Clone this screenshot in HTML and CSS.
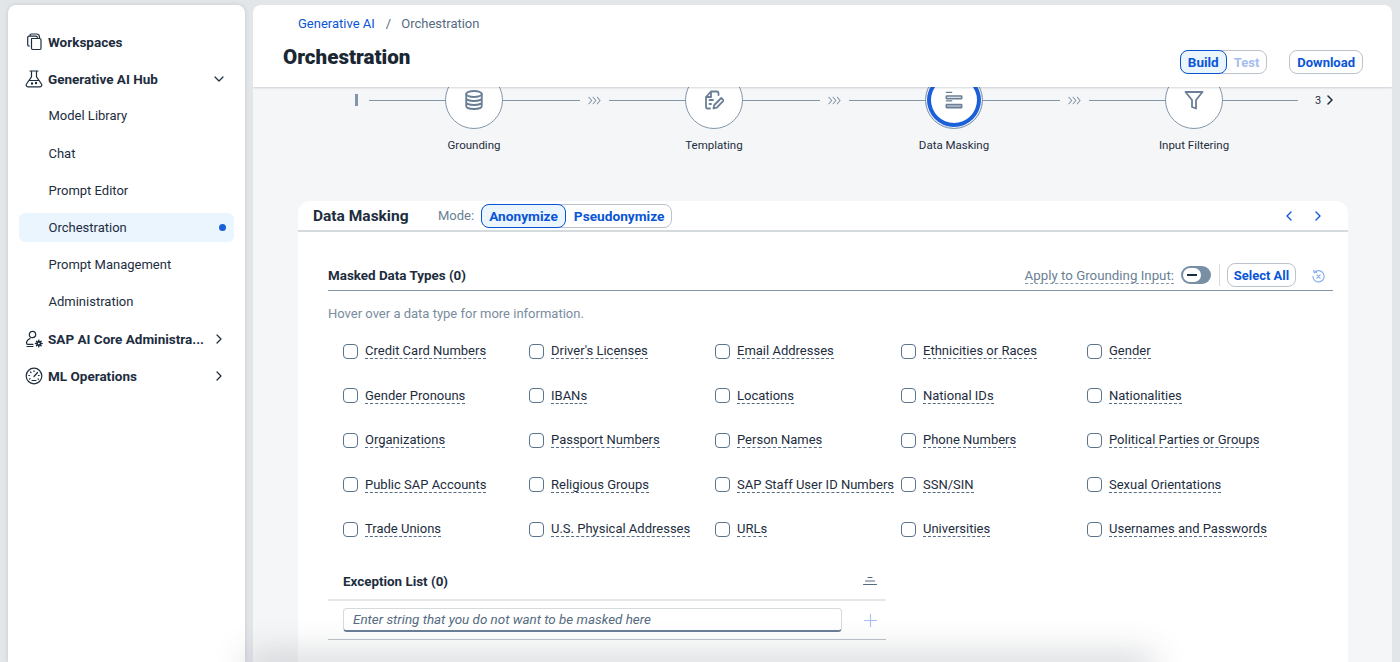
FILE: index.html
```html
<!DOCTYPE html>
<html>
<head>
<meta charset="UTF-8">
<title>Orchestration</title>
<link rel="stylesheet" href="styles.css">
</head>
<body>
<div class="page">
  <nav class="sidebar">
    <a class="nav-item nav-top">
      <svg class="nav-icon" viewBox="0 0 18 18"><path d="M5 3.500V2.800C5 2 5.500 1.500 6.300 1.500h5.200c2 0 3 1 3 3v1M4.500 13.500H4c-.8 0-1.300-.5-1.300-1.300V5c0-.8.500-1.300 1.300-1.300h7c.8 0 1.300.5 1.300 1.300M6.800 6h8c.7 0 1.200.5 1.200 1.200v8.600c0 .7-.5 1.200-1.200 1.200h-7c-.7 0-1.300-.5-1.300-1.200V6.300z" transform="translate(0 -.5)"/></svg>
      <span class="nav-text">Workspaces</span>
    </a>
    <a class="nav-item nav-top">
      <svg class="nav-icon" viewBox="0 0 18 18"><path d="M5 1h8M6.500 1v5.800L1.500 14c-.7 1.200-.2 2.800 1.400 2.800h12.200c1.600 0 2.100-1.600 1.400-2.800l-5-7.200V1M4.500 10.500h9"/><circle cx="7" cy="13.500" r=".6"/><circle cx="11" cy="13" r=".6"/></svg>
      <span class="nav-text">Generative AI Hub</span>
      <svg class="nav-caret" viewBox="0 0 10 10"><path d="M1 3l4 4 4-4"/></svg>
    </a>
    <a class="nav-item nav-sub">Model Library</a>
    <a class="nav-item nav-sub">Chat</a>
    <a class="nav-item nav-sub">Prompt Editor</a>
    <a class="nav-item nav-sub nav-active"><span class="nav-text">Orchestration</span><i class="nav-dot"></i></a>
    <a class="nav-item nav-sub">Prompt Management</a>
    <a class="nav-item nav-sub">Administration</a>
    <a class="nav-item nav-top">
      <svg class="nav-icon" viewBox="0 0 18 18"><circle cx="7.500" cy="4.500" r="3.200"/><path d="M5 8.500C3 9.500 1.500 11 1.500 13c0 .8.500 1.300 1.300 1.300H8M2 16.500h6"/><circle cx="13.800" cy="13.500" r="1.700" class="gear"/><path d="M13.800 10.200v1.500M13.800 15.300v1.500M10.500 13.500H12M15.600 13.500h1.500M11.500 11.200l1 1M15.100 14.800l1 1M11.500 15.800l1-1M15.100 12.200l1-1" class="gear"/></svg>
      <span class="nav-text">SAP AI Core Administra...</span>
      <svg class="nav-caret" viewBox="0 0 10 10"><path d="M3 1l4 4-4 4"/></svg>
    </a>
    <a class="nav-item nav-top">
      <svg class="nav-icon" viewBox="0 0 18 18"><circle cx="9" cy="9" r="7.800"/><path d="M9 9.500l3.500-4"/><path d="M9 3.800v.8M5.500 5l.5.5M3.800 8.500h.8M4.500 12l.6-.3M13.400 8.500h.8M13 12l.6.3M7 13.500h4"/></svg>
      <span class="nav-text">ML Operations</span>
      <svg class="nav-caret" viewBox="0 0 10 10"><path d="M3 1l4 4-4 4"/></svg>
    </a>
  </nav>

  <main class="main">
    <header class="top">
      <div class="crumbs"><a class="link">Generative AI</a><span class="crumb-sep">/</span><span>Orchestration</span></div>
      <div class="title-row">
        <h1>Orchestration</h1>
        <div class="top-actions">
          <div class="seg"><span class="seg-btn seg-on seg-build">Build</span><span class="seg-btn seg-off">Test</span></div>
          <button class="btn">Download</button>
        </div>
      </div>
    </header>

    <section class="stepper">
      <i class="step-start"></i>
      <i class="line line-a"></i>
      <div class="step">
        <div class="circle"><svg viewBox="0 0 20 20" class="step-icon"><ellipse cx="10" cy="4" rx="7.800" ry="3"/><path d="M2.200 4v12c0 1.700 3.500 3 7.800 3s7.800-1.300 7.800-3V4M2.200 8c0 1.700 3.500 3 7.800 3s7.800-1.300 7.800-3M2.200 12c0 1.700 3.500 3 7.800 3s7.800-1.300 7.800-3"/></svg></div>
        <span>Grounding</span>
      </div>
      <i class="line line-b"></i>
      <svg class="chev" viewBox="0 0 14 9"><path d="M1 1l3 3.500L1 8M5.500 1l3 3.500-3 3.500M10 1l3 3.500L10 8"/></svg>
      <i class="line line-a"></i>
      <div class="step">
        <div class="circle"><svg viewBox="0 0 20 20" class="step-icon"><path d="M6 18.500H3.500c-.8 0-1.500-.7-1.500-1.500V7l5-5.500h6c.8 0 1.500.7 1.500 1.500v2M2 7h5V1.500M5.500 10H9M5.500 14h1.500"/><path d="M9.500 18.500l.8-3.500 7-7 2.500 2.500-7 7.200z"/></svg></div>
        <span>Templating</span>
      </div>
      <i class="line line-b"></i>
      <svg class="chev" viewBox="0 0 14 9"><path d="M1 1l3 3.500L1 8M5.500 1l3 3.500-3 3.500M10 1l3 3.500L10 8"/></svg>
      <i class="line line-a"></i>
      <div class="step">
        <div class="circle circle-on"><svg viewBox="0 0 20 20" class="step-icon step-icon-mask"><path d="M1.500 1.500h6M1.500 11h6" class="mask-thin"/><rect x="1.500" y="5.500" width="17" height="3" rx=".4"/><rect x="1.500" y="15" width="17" height="3.500" rx=".4" class="mask-full"/></svg></div>
        <span>Data Masking</span>
      </div>
      <i class="line line-b"></i>
      <svg class="chev" viewBox="0 0 14 9"><path d="M1 1l3 3.500L1 8M5.500 1l3 3.500-3 3.500M10 1l3 3.500L10 8"/></svg>
      <i class="line line-a"></i>
      <div class="step">
        <div class="circle"><svg viewBox="0 0 20 20" class="step-icon"><path d="M1.500 2h17l-6.500 8v8.500l-4-1.500v-7z"/></svg></div>
        <span>Input Filtering</span>
      </div>
      <i class="line line-c"></i>
      <div class="step-more">3<svg viewBox="0 0 10 10"><path d="M3 1l4 4-4 4"/></svg></div>
    </section>

    <section class="card">
      <div class="card-head">
        <h2>Data Masking</h2>
        <span class="mode-label">Mode:</span>
        <div class="seg seg-mode"><span class="seg-btn seg-on">Anonymize</span><span class="seg-btn seg-pseudo">Pseudonymize</span></div>
        <div class="card-nav">
          <svg viewBox="0 0 10 10"><path d="M7 1L3 5l4 4"/></svg>
          <svg viewBox="0 0 10 10"><path d="M3 1l4 4-4 4"/></svg>
        </div>
      </div>

      <div class="masked">
        <div class="masked-head">
          <h3>Masked Data Types (0)</h3>
          <div class="masked-tools">
            <span class="apply">Apply to Grounding Input:</span>
            <span class="switch"><i class="knob"></i></span>
            <i class="tool-sep"></i>
            <button class="btn btn-select">Select All</button>
            <svg class="reset" viewBox="0 0 16 16"><path d="M3.500 3.800A6 6 0 1 1 2 8M2.800 1.500l.7 2.500 2.500-.4M6.300 6.300l3.400 3.400M9.700 6.300l-3.400 3.400"/></svg>
          </div>
        </div>
        <p class="hint">Hover over a data type for more information.</p>
        <div class="types">
          <label class="type"><i class="check"></i><span>Credit Card Numbers</span></label>
          <label class="type"><i class="check"></i><span>Driver's Licenses</span></label>
          <label class="type"><i class="check"></i><span>Email Addresses</span></label>
          <label class="type"><i class="check"></i><span>Ethnicities or Races</span></label>
          <label class="type"><i class="check"></i><span>Gender</span></label>
          <label class="type"><i class="check"></i><span>Gender Pronouns</span></label>
          <label class="type"><i class="check"></i><span>IBANs</span></label>
          <label class="type"><i class="check"></i><span>Locations</span></label>
          <label class="type"><i class="check"></i><span>National IDs</span></label>
          <label class="type"><i class="check"></i><span>Nationalities</span></label>
          <label class="type"><i class="check"></i><span>Organizations</span></label>
          <label class="type"><i class="check"></i><span>Passport Numbers</span></label>
          <label class="type"><i class="check"></i><span>Person Names</span></label>
          <label class="type"><i class="check"></i><span>Phone Numbers</span></label>
          <label class="type"><i class="check"></i><span>Political Parties or Groups</span></label>
          <label class="type"><i class="check"></i><span>Public SAP Accounts</span></label>
          <label class="type"><i class="check"></i><span>Religious Groups</span></label>
          <label class="type"><i class="check"></i><span>SAP Staff User ID Numbers</span></label>
          <label class="type"><i class="check"></i><span>SSN/SIN</span></label>
          <label class="type"><i class="check"></i><span>Sexual Orientations</span></label>
          <label class="type"><i class="check"></i><span>Trade Unions</span></label>
          <label class="type"><i class="check"></i><span>U.S. Physical Addresses</span></label>
          <label class="type"><i class="check"></i><span>URLs</span></label>
          <label class="type"><i class="check"></i><span>Universities</span></label>
          <label class="type"><i class="check"></i><span>Usernames and Passwords</span></label>
        </div>

        <div class="exceptions">
          <div class="exc-head">
            <h3>Exception List (0)</h3>
            <svg viewBox="0 0 14 10"><path d="M5 1.500h4M2.500 5h9" class="exc-thin"/><path d="M0.500 8.500h13"/></svg>
          </div>
          <div class="exc-row">
            <div class="exc-input">Enter string that you do not want to be masked here</div>
            <svg viewBox="0 0 14 14"><path d="M7 .5v13M.5 7h13"/></svg>
          </div>
        </div>
      </div>
    </section>
  </main>
</div>
<div class="bottom-fade"></div>
</body>
</html>
```

FILE: styles.css
```css
* {
  box-sizing: border-box;
}
html, body {
  height: 100%;
  margin: 0;
  overflow: hidden;
}
body {
  background: #e3e6e9;
  color: #1d2d3e;
  font-family: Roboto, "Noto Sans", sans-serif;
  font-size: 13px;
}
h1, h2, h3, p {
  margin: 0;
}
svg {
  fill: none;
  stroke-linecap: round;
  stroke-linejoin: round;
}
.page {
  display: flex;
  gap: 8px;
  height: 100%;
  padding: 5px 8px 0;
}

/* side navigation */
.sidebar {
  display: flex;
  flex-direction: column;
  flex: 0 0 237px;
  gap: 8.2px;
  padding: 22px 11px 0;
  background: #fff;
  border-radius: 8px 8px 0 0;
  box-shadow: 0 0 4px rgba(34, 54, 73, .16);
}
.nav-item {
  display: flex;
  align-items: center;
  height: 29px;
  padding: 0 10px 0 6px;
  border-radius: 6px;
}
.nav-top {
  font-size: 13.500px;
  font-weight: 700;
}
.nav-text {
  flex: 1;
  white-space: nowrap;
}
.nav-icon {
  flex: none;
  width: 18px;
  height: 18px;
  margin-right: 5px;
  stroke: #1d2d3e;
  stroke-width: 1.200;
}
.gear {
  stroke-width: 1.500;
}
.nav-caret {
  flex: none;
  width: 10px;
  height: 10px;
  stroke: #1d2d3e;
  stroke-width: 1.200;
}
.nav-sub {
  padding-left: 29.500px;
}
.nav-active {
  background: #ebf5fe;
}
.nav-dot {
  width: 7px;
  height: 7px;
  margin-right: -2px;
  border-radius: 50%;
  background: #1b60d8;
}

/* main panel */
.main {
  display: flex;
  flex-direction: column;
  flex: 1;
  min-width: 0;
  overflow: hidden;
  background: #f5f6f7;
  border-radius: 8px 8px 0 0;
}
.top {
  position: relative;
  z-index: 2;
  flex: none;
  height: 82px;
  padding: 10px 29px 0 30px;
  background: #fff;
  box-shadow: 0 1px 2px rgba(34, 54, 73, .2);
}
.crumbs {
  display: flex;
  padding-left: 15px;
  color: #556b82;
  line-height: 18px;
}
.link {
  color: #0a55d5;
}
.crumb-sep {
  margin: 0 10px 0 11px;
}
.title-row {
  display: flex;
  justify-content: space-between;
  align-items: center;
  height: 32px;
  margin-top: 8px;
}
h1 {
  font-size: 20.600px;
  font-weight: 900;
  color: #1a2733;
}
.top-actions {
  display: flex;
  gap: 22px;
  margin-top: 10px;
}
.seg {
  display: flex;
  height: 24px;
  border: 1px solid #bcc3ca;
  border-radius: 8px;
  background: #fff;
}
.seg-btn {
  display: flex;
  align-items: center;
  margin: -1px;
  padding: 0 7px;
  border: 1px solid transparent;
  border-radius: 8px;
  color: #0a55d5;
  font-weight: 700;
}
.seg-on {
  background: #ebf5fe;
  border-color: #0a55d5;
}
.seg-build {
  font-size: 13.500px;
}
.seg-off {
  margin-left: 0;
  color: #a6bdf0;
}
.btn {
  height: 24px;
  padding: 0 7px;
  border: 1px solid #bcc3ca;
  border-radius: 8px;
  background: #fff;
  color: #0a55d5;
  font-family: inherit;
  font-size: 13px;
  font-weight: 700;
}

/* stepper */
.stepper {
  display: flex;
  align-items: flex-start;
  flex: none;
  height: 130px;
  margin-top: -16px;
  padding-left: 101px;
}
.step-start {
  flex: none;
  width: 3px;
  height: 12px;
  margin: 23px 11px 0 1px;
  background: #8396a8;
}
.line {
  flex: none;
  height: 1px;
  margin-top: 29px;
  background: #8396a8;
}
.line-a {
  width: 76px;
}
.line-b {
  width: 77px;
}
.line-c {
  width: 75px;
}
.chev {
  flex: none;
  width: 13px;
  height: 9px;
  margin: 25px 8px 0;
  stroke: #8396a8;
  stroke-width: 1.200;
}
.step {
  display: flex;
  flex-direction: column;
  align-items: center;
  flex: none;
  width: 58px;
  gap: 9px;
  font-size: 11.500px;
  white-space: nowrap;
}
.circle {
  display: flex;
  align-items: center;
  justify-content: center;
  width: 58px;
  height: 58px;
  border: 1px solid #8396a8;
  border-radius: 50%;
  background: #fff;
}
.circle-on {
  box-shadow: inset 0 0 0 1px #fff, inset 0 0 0 5px #1b60d8;
}
.step-icon {
  width: 20px;
  height: 20px;
  stroke: #6a7f95;
  stroke-width: 1.800;
}
.step-icon-mask {
  width: 18px;
}
.mask-thin {
  stroke-width: 1.400;
}
.mask-full {
  fill: #b6c2ce;
}
.step-more {
  display: flex;
  align-items: center;
  gap: 4px;
  height: 20px;
  margin: 19px 0 0 17px;
  font-size: 11px;
}
.step-more svg {
  width: 10px;
  height: 10px;
  stroke: #1d2d3e;
  stroke-width: 1.500;
}

/* data masking card */
.card {
  flex: 1;
  margin: 0 44px 0 45px;
  background: #fff;
  border-radius: 12px 12px 0 0;
}
.card-head {
  display: flex;
  align-items: center;
  height: 31px;
  padding: 0 25px 0 15px;
  border-bottom: 2px solid #d5dadd;
}
h2 {
  width: 125px;
  font-size: 15.500px;
  font-weight: 700;
}
.mode-label {
  margin-right: 7px;
  color: #6a7f95;
}
.seg-mode .seg-btn {
  font-size: 13.700px;
}
.seg .seg-pseudo {
  padding: 0 7px 0 9px;
}
.card-nav {
  display: flex;
  gap: 19px;
  margin-left: auto;
}
.card-nav svg {
  width: 10px;
  height: 10px;
  stroke: #0a55d5;
  stroke-width: 1.300;
}
.masked {
  padding: 28px 15px 0 30px;
}
.masked-head {
  display: flex;
  justify-content: space-between;
  align-items: center;
  height: 31px;
  border-bottom: 1px solid #8396a8;
}
h3 {
  font-size: 13.400px;
  font-weight: 700;
}
.masked-tools {
  display: flex;
  align-items: center;
}
.apply {
  margin-top: 2px;
  border-bottom: 1px dashed #8396a8;
  color: #6a7f95;
  font-size: 13.300px;
  line-height: 15px;
}
.switch {
  display: flex;
  align-items: center;
  width: 30px;
  height: 18px;
  margin-left: 7px;
  border-radius: 9px;
  background: #788fa6;
}
.knob {
  position: relative;
  width: 18px;
  height: 14px;
  margin-left: 2px;
  border-radius: 7px;
  background: #fff;
}
.knob::after {
  content: "";
  position: absolute;
  left: 4px;
  top: 6px;
  width: 10px;
  height: 2px;
  background: #1d2d3e;
}
.tool-sep {
  width: 1px;
  height: 22px;
  margin: 0 7px 0 8px;
  background: #d5dadd;
}
.btn-select {
  width: 69px;
  padding: 0;
}
.reset {
  width: 15px;
  height: 15px;
  margin: 2px 7px 0 15px;
  stroke: #8ab0f0;
  stroke-width: 1.300;
}
.hint {
  margin-top: 14px;
  color: #7a8c9e;
  line-height: 18px;
}
.types {
  display: grid;
  grid-template-columns: repeat(5, 186px);
  grid-auto-rows: 44.500px;
  align-items: center;
  margin-top: 6px;
  padding-left: 15px;
}
.type {
  display: flex;
  align-items: center;
  gap: 7px;
  height: 44.500px;
  white-space: nowrap;
}
.type span {
  border-bottom: 1px dashed #556b82;
  line-height: 15px;
}
.check {
  flex: none;
  width: 15px;
  height: 15px;
  border: 1px solid #5b738b;
  border-radius: 4px;
  background: #fff;
}
.exceptions {
  width: 558px;
  margin-top: 12px;
}
.exc-head {
  display: flex;
  justify-content: space-between;
  align-items: center;
  height: 37px;
  padding: 0 9px 0 15px;
  border-bottom: 2px solid #e5e8ea;
}
.exc-head svg {
  width: 14px;
  height: 10px;
  stroke: #556b82;
  stroke-width: 1.100;
}
.exc-row {
  display: flex;
  justify-content: space-between;
  align-items: center;
  height: 39px;
  padding: 1px 9px 0 15px;
  border-bottom: 1px solid #bcc3ca;
}
.exc-input {
  width: 499px;
  height: 24px;
  padding-left: 9px;
  border: 1px solid #d5dadd;
  border-bottom: 2px solid #6a7f95;
  border-radius: 4px;
  color: #556b82;
  font-size: 13.400px;
  font-style: italic;
  line-height: 22px;
}
.exc-row svg {
  width: 13px;
  height: 13px;
  stroke: #a6bdf0;
  stroke-width: 1.200;
}

/* blurred shadow coming up from below the window */
.bottom-fade {
  position: absolute;
  left: 255px;
  right: 255px;
  bottom: -14px;
  height: 14px;
  box-shadow: 0 0 34px 8px rgba(60, 70, 80, .22);
}
```
